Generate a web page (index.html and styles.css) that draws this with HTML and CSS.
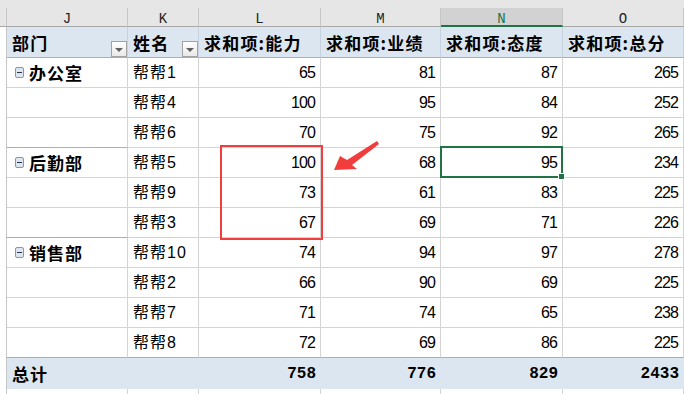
FILE: index.html
```html
<!DOCTYPE html>
<html lang="zh-CN">
<head>
<meta charset="utf-8">
<title>数据透视表</title>
<link rel="stylesheet" href="styles.css">
</head>
<body>
<div class="sheet">
  <div class="row colhead">
    <div class="ch"><span class="lt"></span></div>
    <div class="ch"><span class="lt">J</span></div>
    <div class="ch"><span class="lt">K</span></div>
    <div class="ch"><span class="lt">L</span></div>
    <div class="ch"><span class="lt">M</span></div>
    <div class="ch"><span class="lt sel">N</span></div>
    <div class="ch"><span class="lt">O</span></div>
  </div>

  <div class="row phead">
    <div class="strip"></div>
    <div class="c h">部门<span class="dd"></span></div>
    <div class="c h">姓名<span class="dd"></span></div>
    <div class="c h">求和项:能力</div>
    <div class="c h">求和项:业绩</div>
    <div class="c h">求和项:态度</div>
    <div class="c h">求和项:总分</div>
  </div>

  <div class="row">
    <div class="strip"></div>
    <div class="c grp"><svg class="tg" width="9" height="11" viewBox="0 0 9 11"><rect x="0.5" y="0.5" width="8" height="10" rx="1.5" fill="#dfe5ee" stroke="#8796b0"/><path d="M2 5.5h5" stroke="#26344f"/></svg>办公室</div>
    <div class="c name">帮帮1</div>
    <div class="c num">65</div><div class="c num">81</div><div class="c num">87</div><div class="c num">265</div>
  </div>
  <div class="row">
    <div class="strip"></div>
    <div class="c grp"></div>
    <div class="c name">帮帮4</div>
    <div class="c num">100</div><div class="c num">95</div><div class="c num">84</div><div class="c num">252</div>
  </div>
  <div class="row">
    <div class="strip"></div>
    <div class="c grp gend"></div>
    <div class="c name">帮帮6</div>
    <div class="c num">70</div><div class="c num">75</div><div class="c num">92</div><div class="c num">265</div>
  </div>

  <div class="row">
    <div class="strip"></div>
    <div class="c grp"><svg class="tg" width="9" height="11" viewBox="0 0 9 11"><rect x="0.5" y="0.5" width="8" height="10" rx="1.5" fill="#dfe5ee" stroke="#8796b0"/><path d="M2 5.5h5" stroke="#26344f"/></svg>后勤部</div>
    <div class="c name">帮帮5</div>
    <div class="c num">100</div><div class="c num">68</div><div class="c num sel">95</div><div class="c num">234</div>
  </div>
  <div class="row">
    <div class="strip"></div>
    <div class="c grp"></div>
    <div class="c name">帮帮9</div>
    <div class="c num">73</div><div class="c num">61</div><div class="c num">83</div><div class="c num">225</div>
  </div>
  <div class="row">
    <div class="strip"></div>
    <div class="c grp gend"></div>
    <div class="c name">帮帮3</div>
    <div class="c num">67</div><div class="c num">69</div><div class="c num">71</div><div class="c num">226</div>
  </div>

  <div class="row">
    <div class="strip"></div>
    <div class="c grp"><svg class="tg" width="9" height="11" viewBox="0 0 9 11"><rect x="0.5" y="0.5" width="8" height="10" rx="1.5" fill="#dfe5ee" stroke="#8796b0"/><path d="M2 5.5h5" stroke="#26344f"/></svg>销售部</div>
    <div class="c name">帮帮10</div>
    <div class="c num">74</div><div class="c num">94</div><div class="c num">97</div><div class="c num">278</div>
  </div>
  <div class="row">
    <div class="strip"></div>
    <div class="c grp"></div>
    <div class="c name">帮帮2</div>
    <div class="c num">66</div><div class="c num">90</div><div class="c num">69</div><div class="c num">225</div>
  </div>
  <div class="row">
    <div class="strip"></div>
    <div class="c grp"></div>
    <div class="c name">帮帮7</div>
    <div class="c num">71</div><div class="c num">74</div><div class="c num">65</div><div class="c num">238</div>
  </div>
  <div class="row last">
    <div class="strip"></div>
    <div class="c grp"></div>
    <div class="c name">帮帮8</div>
    <div class="c num">72</div><div class="c num">69</div><div class="c num">86</div><div class="c num">225</div>
  </div>

  <div class="row total">
    <div class="strip"></div>
    <div class="c tl">总计</div>
    <div class="c"></div>
    <div class="c tnum">758</div><div class="c tnum">776</div><div class="c tnum">829</div><div class="c tnum">2433</div>
  </div>

  <div class="row tail">
    <div class="strip"></div>
    <div class="c"></div><div class="c"></div><div class="c"></div><div class="c"></div><div class="c"></div><div class="c"></div>
  </div>

  <div class="mark"></div>
  <svg class="arrow" width="684" height="394" viewBox="0 0 684 394">
    <polygon points="334,170 340,156 347,160 377,141 379,144 352,165 357,169" fill="#f23d3d"/>
  </svg>
</div>
</body>
</html>
```

FILE: styles.css
```css
html, body {
  margin: 0;
  padding: 0;
  background: #fff;
}

body {
  width: 684px;
  height: 394px;
  overflow: hidden;
  font-family: "Liberation Sans", "Noto Sans CJK SC", sans-serif;
  color: #000;
}

.sheet {
  position: relative;
  width: 684px;
  height: 394px;
  overflow: hidden;
}

.row {
  display: grid;
  grid-template-columns: 7px 121px 71px 122px 120px 122px 121px;
}

/* column letters */
.colhead {
  height: 27px;
  background: #e6e6e6;
}

.ch {
  padding-top: 8px;
}

.lt {
  box-sizing: border-box;
  display: flex;
  justify-content: center;
  align-items: center;
  height: 19px;
  padding-top: 3px;
  border-right: 1px solid #c6c6c6;
  border-bottom: 1px solid #a8a8a8;
  font: 14px "Liberation Mono", monospace;
  color: #222;
}

.lt.sel {
  background: #d2d2d2;
  color: #217346;
  border-bottom: 2px solid #217346;
  padding-top: 4px;
}

/* cells */
.strip {
  border-right: 1px solid #c6c6c6;
}

.c {
  box-sizing: border-box;
  height: 30px;
  display: flex;
  align-items: center;
  padding: 0 5px;
  border-right: 1px solid #d4d4d4;
  border-bottom: 1px solid #d4d4d4;
  white-space: nowrap;
}

.phead .c {
  height: 31px;
  padding-right: 0;
  background: #dce6f1;
  border-bottom-color: #95b3d7;
  border-right-color: #c7d2df;
  font: bold 17px "Noto Sans CJK SC", sans-serif;
  letter-spacing: 1.2px;
  line-height: 1;
}

.dd {
  box-sizing: border-box;
  position: relative;
  width: 16px;
  height: 16px;
  margin-left: auto;
  align-self: flex-end;
  border: 1px solid #a3a3a3;
  background: linear-gradient(#ffffff, #e9e9e9);
}

.dd::after {
  content: "";
  position: absolute;
  left: 3px;
  top: 6px;
  border-left: 4px solid transparent;
  border-right: 4px solid transparent;
  border-top: 4px solid #5f5f5f;
}

.grp {
  padding-left: 8px;
  gap: 5px;
  font: bold 17px "Noto Sans CJK SC", sans-serif;
  letter-spacing: 1px;
  line-height: 1;
}

.grp.gend {
  border-bottom-color: #95b3d7;
}

.tg {
  flex: none;
  letter-spacing: 0;
}

.name {
  font-size: 16px;
  letter-spacing: 1px;
  line-height: 1;
}

.num {
  justify-content: flex-end;
  font-size: 16px;
  letter-spacing: -0.9px;
}

.last .c {
  border-bottom-color: #95b3d7;
}

.c.sel {
  position: relative;
}

.c.sel::after {
  content: "";
  position: absolute;
  left: -1px;
  right: -1px;
  top: -2px;
  bottom: -1px;
  border: 2px solid #217346;
}

.c.sel::before {
  content: "";
  position: absolute;
  right: -3px;
  bottom: -3px;
  width: 5px;
  height: 5px;
  background: #217346;
  border: 1px solid #fff;
  z-index: 2;
}

/* grand total */
.total .c {
  height: 31px;
  background: #dce6f1;
  border: none;
}

.tl {
  font: bold 17px "Noto Sans CJK SC", sans-serif;
  letter-spacing: 1px;
}

.tnum {
  justify-content: flex-end;
  font: bold 16px "Liberation Mono", monospace;
}

.tail .c {
  height: 12px;
  border-bottom: none;
}

/* annotations */
.mark {
  position: absolute;
  left: 220px;
  top: 145px;
  width: 103px;
  height: 95px;
  box-sizing: border-box;
  border: 2px solid #f03e3e;
}

.arrow {
  position: absolute;
  left: 0;
  top: 0;
  pointer-events: none;
}
```
